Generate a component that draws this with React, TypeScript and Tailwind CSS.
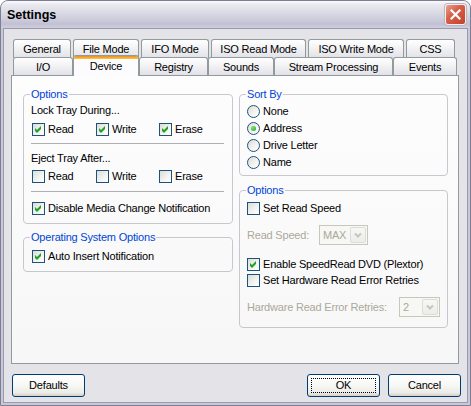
import React from "react";

function CheckMark() {
  return (
    <svg width="11" height="11" viewBox="0 0 11 11" className="block">
      <polygon points="2,4 4,6 8,2 8,5 4,9 2,7" fill="#21a121" />
    </svg>
  );
}

function Checkbox({ checked = false, label, className = "" }: { checked?: boolean; label: string; className?: string }) {
  return (
    <div className={`flex items-center h-[13px] ${className}`}>
      <span className="w-[13px] h-[13px] shrink-0 border border-[#1c5180] bg-[linear-gradient(135deg,#dcdcd7_0%,#f4f4f0_60%,#ffffff_100%)] flex items-center justify-center">
        {checked && <CheckMark />}
      </span>
      <span className="ml-[3px] leading-[13px] whitespace-nowrap">{label}</span>
    </div>
  );
}

function Radio({ checked = false, label }: { checked?: boolean; label: string }) {
  return (
    <div className="flex items-center h-[17px]">
      <span className="w-[13px] h-[13px] shrink-0 rounded-full border border-[#1c5180] bg-[linear-gradient(135deg,#dcdcd7_0%,#f4f4f0_60%,#ffffff_100%)] flex items-center justify-center">
        {checked && <span className="w-[5px] h-[5px] rounded-full bg-[radial-gradient(circle_at_35%_35%,#7fe27b,#21a121)]" />}
      </span>
      <span className="ml-[3px] leading-[13px] whitespace-nowrap">{label}</span>
    </div>
  );
}

function Combo({ value, className }: { value: string; className: string }) {
  return (
    <div className={`h-[20px] border border-[#c9c7ba] bg-[#f7f7f4] flex items-center ${className}`}>
      <span className="flex-1 pl-[3px] text-[#aca899] leading-[13px]">{value}</span>
      <span className="w-[16px] h-[16px] mr-[1px] rounded-[2px] border border-[#dcdcd8] bg-[linear-gradient(to_bottom,#f7f7f5,#ecece8)] flex items-center justify-center">
        <svg width="8" height="6" viewBox="0 0 8 6">
          <path d="M1 1.5 L4 4.5 L7 1.5" stroke="#c4c4c0" strokeWidth="2" fill="none" />
        </svg>
      </span>
    </div>
  );
}

function Group({ title, className = "", children }: { title: string; className?: string; children: React.ReactNode }) {
  return (
    <fieldset className={`border border-[#c8c7d0] rounded-[4px] m-0 p-0 min-w-0 ${className}`}>
      <legend className="ml-[6px] px-[1px] text-[#0046d5] leading-[13px] h-[13px]">{title}</legend>
      {children}
    </fieldset>
  );
}

function Tab({ label, className }: { label: string; className: string }) {
  return (
    <div
      className={`rounded-t-[3px] border border-b-0 border-[#919b9c] bg-[linear-gradient(to_bottom,#ffffff_0%,#f4f4f6_40%,#e1e1e8_100%)] flex items-center justify-center whitespace-nowrap leading-[13px] ${className}`}
    >
      {label}
    </div>
  );
}

function Button({ label, focused = false, className = "" }: { label: string; focused?: boolean; className?: string }) {
  return (
    <div
      className={`h-[23px] rounded-[3px] border border-[#003c74] bg-[linear-gradient(to_bottom,#ffffff_0%,#f7f7f4_50%,#ecebe6_85%,#d6d0c5_100%)] flex items-center justify-center relative ${className}`}
    >
      {focused && <span className="absolute left-[3px] right-[3px] top-[3px] bottom-[3px] border border-dotted border-black" />}
      <span className="leading-[13px]">{label}</span>
    </div>
  );
}

export default function App() {
  return (
    <div className="w-[471px] h-[406px] font-['Liberation_Sans',Arial,sans-serif] text-[11px] tracking-[-0.2px] text-black">
      <div className="w-full h-full flex flex-col rounded-t-[8px] border border-[#7e7d96] bg-[#c9c8d6] overflow-hidden">
        {/* Title bar */}
        <div className="h-[27px] shrink-0 flex items-center justify-between pl-[6px] pr-[4px] bg-[linear-gradient(to_bottom,#fdfdfe_0%,#eaeaf0_12%,#dcdce6_40%,#cfcedd_65%,#c2c1d4_85%,#cecedc_100%)]">
          <span className="text-[12.5px] font-bold tracking-normal text-black leading-[15px] mt-[1px]">Settings</span>
          <div className="w-[21px] h-[21px] rounded-[3px] border border-[#f4f0f0] bg-[linear-gradient(135deg,#e9a08f_0%,#d9604a_40%,#c2412c_100%)] flex items-center justify-center shadow-[0_0_0_1px_#b8b7c8]">
            <svg width="13" height="13" viewBox="0 0 13 13">
              <path d="M2.5 2.5 L10.5 10.5 M10.5 2.5 L2.5 10.5" stroke="#ffffff" strokeWidth="2.2" strokeLinecap="square" />
            </svg>
          </div>
        </div>
        {/* Body */}
        <div className="flex-1 mx-[2px] mb-[2px] border border-[#9a99b0] bg-[#e4e3e8] flex flex-col pl-[7px] pr-[6px] pt-[10px]">
          {/* Tabs */}
          <div className="ml-[2px] flex gap-[2px] h-[18px] items-start">
            <Tab label="General" className="w-[58px] h-[19px]" />
            <Tab label="File Mode" className="w-[66px] h-[19px]" />
            <Tab label="IFO Mode" className="w-[68px] h-[19px]" />
            <Tab label="ISO Read Mode" className="w-[95px] h-[19px]" />
            <Tab label="ISO Write Mode" className="w-[96px] h-[19px]" />
            <Tab label="CSS" className="w-[49px] h-[19px]" />
          </div>
          <div className="ml-[2px] flex h-[18px] items-start relative z-[1]">
            <Tab label="I/O" className="w-[60px] h-[18px] pt-[2px]" />
            <div className="w-[66px] h-[21px] -mt-[2px] relative z-10 rounded-t-[3px] border border-b-0 border-[#919b9c] bg-[#fcfcfe] flex flex-col overflow-hidden">
              <div className="h-[3px] bg-[linear-gradient(to_bottom,#e68b2c,#ffc73c)]" />
              <div className="flex-1 flex items-center justify-center leading-[13px] pb-[2px]">Device</div>
            </div>
            <Tab label="Registry" className="w-[69px] h-[18px] pt-[2px]" />
            <Tab label="Sounds" className="w-[66px] h-[18px] pt-[2px]" />
            <Tab label="Stream Processing" className="w-[119px] h-[18px] pt-[2px]" />
            <Tab label="Events" className="w-[64px] h-[18px] pt-[2px]" />
          </div>
          {/* Panel */}
          <div className="w-[448px] h-[289px] border border-[#919b9c] bg-[linear-gradient(to_bottom,#fdfdfe_0%,#f7f7f8_100%)] flex gap-[6px] pl-[11px] pt-[12px]">
            {/* Left column */}
            <div className="w-[210px] flex flex-col">
              <Group title="Options" className="pb-[8px]">
                <div className="mt-[3px] pl-[7px] leading-[13px] h-[13px]">Lock Tray During...</div>
                <div className="mt-[6px] pl-[8px] flex">
                  <Checkbox checked label="Read" className="w-[64px]" />
                  <Checkbox checked label="Write" className="w-[63px]" />
                  <Checkbox checked label="Erase" />
                </div>
                <div className="mt-[7px] ml-[7px] mr-[8px] h-px bg-[#b0afb8]" />
                <div className="mt-[8px] pl-[7px] leading-[13px] h-[13px]">Eject Tray After...</div>
                <div className="mt-[5px] pl-[8px] flex">
                  <Checkbox label="Read" className="w-[64px]" />
                  <Checkbox label="Write" className="w-[63px]" />
                  <Checkbox label="Erase" />
                </div>
                <div className="mt-[8px] ml-[7px] mr-[8px] h-px bg-[#b0afb8]" />
                <div className="mt-[10px] pl-[8px]">
                  <Checkbox checked label="Disable Media Change Notification" />
                </div>
              </Group>
              <Group title="Operating System Options" className="mt-[7px] pb-[8px]">
                <div className="mt-[6px] pl-[8px]">
                  <Checkbox checked label="Auto Insert Notification" />
                </div>
              </Group>
            </div>
            {/* Right column */}
            <div className="w-[209px] flex flex-col">
              <Group title="Sort By" className="pb-[4px]">
                <div className="mt-[2px] pl-[7px] flex flex-col">
                  <Radio label="None" />
                  <Radio checked label="Address" />
                  <Radio label="Drive Letter" />
                  <Radio label="Name" />
                </div>
              </Group>
              <Group title="Options" className="mt-[8px] pb-[10px]">
                <div className="mt-[5px] pl-[7px]">
                  <Checkbox label="Set Read Speed" />
                </div>
                <div className="mt-[10px] pl-[7px] flex items-center h-[20px]">
                  <span className="w-[72px] text-[#aca899] leading-[13px]">Read Speed:</span>
                  <Combo value="MAX" className="w-[49px]" />
                </div>
                <div className="mt-[13px] pl-[7px]">
                  <Checkbox checked label="Enable SpeedRead DVD (Plextor)" />
                </div>
                <div className="mt-[3px] pl-[7px]">
                  <Checkbox label="Set Hardware Read Error Retries" />
                </div>
                <div className="mt-[10px] pl-[7px] flex items-center h-[20px]">
                  <span className="w-[152px] text-[#aca899] leading-[13px] whitespace-nowrap">Hardware Read Error Retries:</span>
                  <Combo value="2" className="w-[41px]" />
                </div>
              </Group>
            </div>
          </div>
          {/* Buttons */}
          <div className="mt-[10px] flex items-center pl-[1px]">
            <Button label="Defaults" className="w-[73px]" />
            <div className="flex-1" />
            <Button label="OK" focused className="w-[73px]" />
            <Button label="Cancel" className="w-[73px] ml-[8px]" />
          </div>
        </div>
      </div>
    </div>
  );
}
